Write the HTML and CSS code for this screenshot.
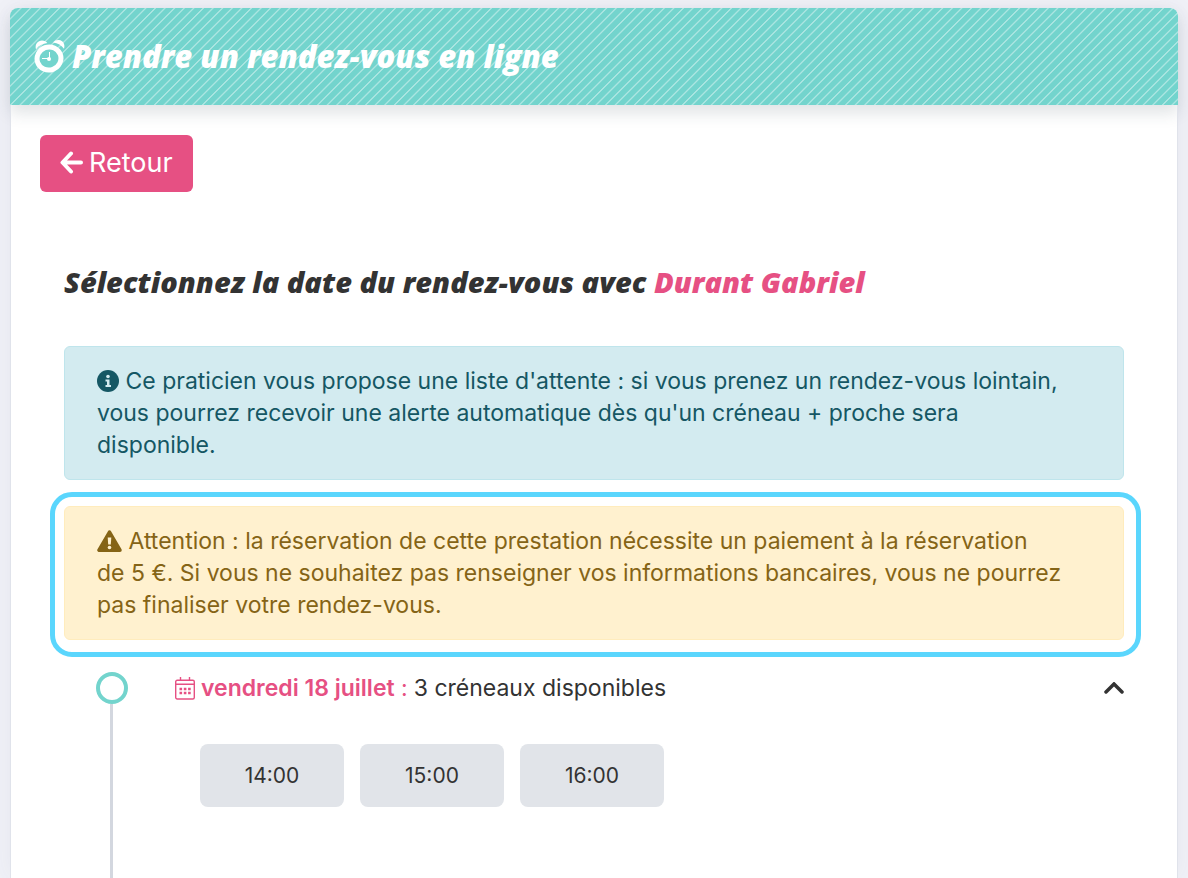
FILE: index.html
```
<!DOCTYPE html>
<html lang="fr">
<head>
    <meta charset="UTF-8">
    <meta name="viewport" content="width=device-width, initial-scale=1">
    <title>Prendre un rendez-vous en ligne</title>
    <link rel="stylesheet" href="styles.css">
</head>
<body>
    <main class="card">
        <header class="card-header">
            <svg class="icon-clock" viewBox="0 0 32 34" aria-hidden="true">
                <path fill="#fff" d="M2 10.500C.5 5 4 1.500 8 1.500c2.500 0 4.300 1 5.300 2.500C8.500 4.500 4.800 6.500 2 10.500zM19 3.500C20.500 1.500 22.500.8 25 1c4 .5 6.500 4.500 5 8.800C27.500 6.300 24 4.200 19 3.500z"/>
                <ellipse cx="15" cy="19.500" rx="12" ry="11.500" fill="#73d4cd" stroke="#fff" stroke-width="5" transform="rotate(-20 15 19.500)"/>
                <path d="M15.500 13v6M8 19.500h7" stroke="#fff" stroke-width="1"/>
                <circle cx="15" cy="20" r="2" fill="#fff"/>
            </svg>
            <h1>Prendre un rendez-vous en ligne</h1>
        </header>
        <div class="card-body">
            <button type="button" class="btn-back">
                <svg class="icon-arrow" viewBox="0 0 24 24" aria-hidden="true">
                    <path d="M11 2.500L2.500 11.500l8.500 9M3 11.500h18"/>
                </svg>
                Retour
            </button>
            <section class="booking">
                <h2>Sélectionnez la date du rendez-vous avec <span class="name">Durant Gabriel</span></h2>
                <div class="alert alert-info">
                    <svg class="icon-info" viewBox="0 0 22 22" aria-hidden="true">
                        <circle cx="11" cy="11" r="11" fill="currentColor"/>
                        <circle cx="11" cy="6.500" r="1.800" fill="#d3ebf0"/>
                        <path d="M8.500 9.500h4v5.500h1.500v2H8.500v-2H10v-3.500H8.500z" fill="#d3ebf0"/>
                    </svg>
                    Ce praticien vous propose une liste d'attente : si vous prenez un rendez-vous lointain,<br>
                    vous pourrez recevoir une alerte automatique dès qu'un créneau + proche sera<br>
                    disponible.
                </div>
                <div class="highlight">
                    <div class="alert alert-warning">
                        <svg class="icon-warning" viewBox="0 0 25 22" aria-hidden="true">
                            <path d="M12.500 2L2 20.200h21z" fill="currentColor" stroke="currentColor" stroke-width="3.500" stroke-linejoin="round"/>
                            <path d="M10.700 7.500h3.600l-.5 7h-2.600z" fill="#fff1cf"/>
                            <circle cx="12.500" cy="17.500" r="1.800" fill="#fff1cf"/>
                        </svg>
                        Attention : la réservation de cette prestation nécessite un paiement à la réservation<br>
                        de 5 €. Si vous ne souhaitez pas renseigner vos informations bancaires, vous ne pourrez<br>
                        pas finaliser votre rendez-vous.
                    </div>
                </div>
                <div class="timeline">
                    <div class="rail"><span class="dot"></span></div>
                    <div class="day">
                        <button type="button" class="day-header" aria-expanded="true">
                            <svg class="icon-calendar" viewBox="0 0 20 23" aria-hidden="true">
                                <rect x=".7" y="3.300" width="18.600" height="18.700" rx="1.500"/>
                                <path d="M.7 7.300h18.600M5.500 0v3.500M14.500 0v3.500"/>
                                <path d="M4.500 12h11.500M4.500 16h11.500" stroke-width="2.400" stroke-dasharray="2.600 1.700"/>
                            </svg>
                            <span class="date"><b>vendredi 18 juillet</b> :</span>
                            <span>3 créneaux disponibles</span>
                            <svg class="icon-chevron" viewBox="0 0 20 12" aria-hidden="true">
                                <path d="M2 10l8-8 8 8"/>
                            </svg>
                        </button>
                        <div class="slots">
                            <button type="button">14:00</button>
                            <button type="button">15:00</button>
                            <button type="button">16:00</button>
                        </div>
                    </div>
                </div>
            </section>
        </div>
    </main>
</body>
</html>
```
FILE: styles.css
```
/* reset css */
* {
    box-sizing: border-box;
}
html,
body {
    height: 100%;
}
body {
    margin: 0;
    padding: 8px 10px 0;
    font-family: Inter, "Open Sans", sans-serif;
    font-size: 23px;
    line-height: 32px;
    color: #333;
    background: #f0f1f7;
}
h1,
h2 {
    margin: 0;
    font-family: "Open Sans", sans-serif;
    font-style: italic;
    font-weight: 800;
    line-height: 40px;
}
button {
    padding: 0;
    border: 0;
    font: inherit;
    color: inherit;
    cursor: pointer;
}
svg {
    flex: none;
}
/* card */
.card {
    display: flex;
    flex-direction: column;
    min-height: 100%;
    border-radius: 8px 8px 0 0;
    background: #fff;
    box-shadow: 0 0 24px rgba(60, 70, 100, .06);
}
.card-header {
    display: flex;
    align-items: center;
    gap: 6px;
    padding: 28px 24px 29px;
    border-radius: 8px 8px 0 0;
    color: #fff;
    background: repeating-linear-gradient(135deg, #73d4cd 0, #abe5e1 1%, #abe5e1 2%, #73d4cd 3%, #73d4cd 10%);
    background-size: 48px 48px;
    box-shadow: 0 8px 16px rgba(50, 70, 80, .15);
}
.card-header h1 {
    font-size: 31px;
}
.card-body {
    display: flex;
    flex: 1;
    flex-direction: column;
    align-items: flex-start;
    padding: 30px 29px 0;
    border: solid #e0e3eb;
    border-width: 0 1px;
}
.btn-back {
    display: flex;
    align-items: center;
    gap: 5px;
    padding: 12px 20px 13px;
    border-radius: 6px;
    font-size: 27px;
    color: #fff;
    background: #e65083;
}
/* booking */
.booking {
    display: flex;
    flex: 1;
    flex-direction: column;
    width: 100%;
    padding: 70px 24px 0;
}
.booking h2 {
    margin-bottom: 44px;
    font-size: 29px;
}
.name,
.date {
    color: #e65083;
}
.alert {
    padding: 18px 32px;
    border: 1px solid #bfe5ec;
    border-radius: 6px;
}
.alert svg {
    vertical-align: -3px;
}
.alert-info {
    color: #155764;
    background: #d3ebf0;
}
.alert-warning {
    border-color: #ffecbd;
    color: #856416;
    background: #fff1cf;
}
.highlight {
    margin: 12px -17px 15px -14px;
    padding: 9px 12px 12px 9px;
    border: 5px solid #5ad6fd;
    border-radius: 22px;
}
/* timeline */
.timeline {
    display: flex;
    flex: 1;
    gap: 47px;
    padding-left: 32px;
}
.rail {
    display: flex;
    flex-direction: column;
    align-items: center;
    width: 32px;
}
.rail:after {
    content: '';
    flex: 1;
    margin-right: 1px;
    width: 3px;
    background: #d3d7df;
}
.dot {
    width: 32px;
    height: 32px;
    border: 4px solid #73d4cd;
    border-radius: 50%;
}
.day {
    flex: 1;
}
.day-header {
    display: flex;
    align-items: center;
    gap: 6px;
    width: 100%;
    text-align: left;
    background: none;
}
.day-header b {
    font-weight: 600;
}
.slots {
    display: flex;
    gap: 16px;
    padding: 40px 25px;
}
.slots button {
    width: 144px;
    height: 63px;
    border-radius: 8px;
    font-size: 21px;
    background: #e1e4e9;
}
/* icons */
.icon-clock {
    width: 32px;
    height: 34px;
}
.icon-arrow {
    width: 24px;
    height: 24px;
    fill: none;
    stroke: currentColor;
    stroke-width: 4;
    stroke-linecap: round;
    stroke-linejoin: round;
}
.icon-info {
    width: 22px;
    height: 22px;
}
.icon-warning {
    width: 25px;
    height: 22px;
}
.icon-calendar {
    width: 20px;
    height: 23px;
    fill: none;
    stroke: #e65083;
    stroke-width: 1.4;
}
.icon-chevron {
    width: 20px;
    height: 12px;
    margin-left: auto;
    fill: none;
    stroke: currentColor;
    stroke-width: 3.5;
    stroke-linecap: round;
}
```
